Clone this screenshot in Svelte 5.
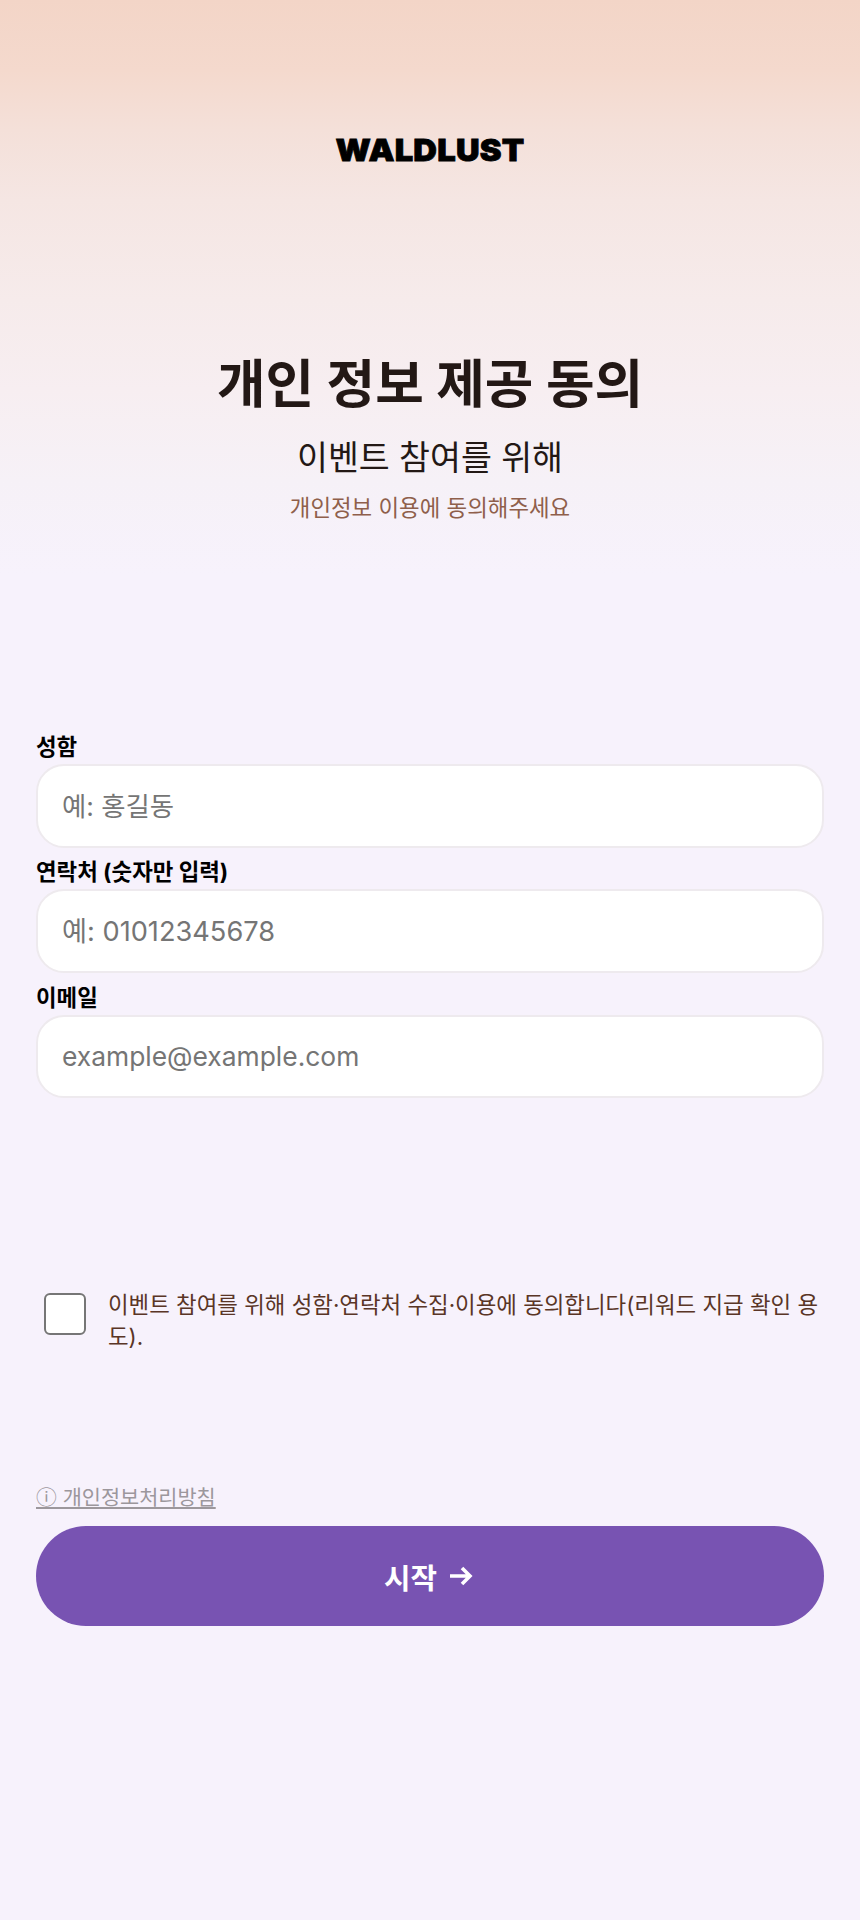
<script>
  let name = ''
  let phone = ''
  let email = ''
  let agreed = false
</script>

<div class="page">
  <header class="logo">WALDLUST</header>

  <section class="intro">
    <h1>개인 정보 제공 동의</h1>
    <h2>이벤트 참여를 위해</h2>
    <p>개인정보 이용에 동의해주세요</p>
  </section>

  <form class="fields" on:submit|preventDefault>
    <label class="field">
      <span>성함</span>
      <input type="text" placeholder="예: 홍길동" bind:value={name} />
    </label>
    <label class="field">
      <span>연락처 (숫자만 입력)</span>
      <input class="tel" type="tel" placeholder="예: 01012345678" bind:value={phone} />
    </label>
    <label class="field">
      <span>이메일</span>
      <input type="text" placeholder="example@example.com" bind:value={email} />
    </label>
  </form>

  <label class="consent">
    <input type="checkbox" bind:checked={agreed} />
    <span>이벤트 참여를 위해 성함·연락처 수집·이용에 동의합니다(리워드 지급 확인 용도).</span>
  </label>

  <a class="policy" href="#policy">ⓘ 개인정보처리방침</a>

  <button class="start" type="button">
    시작
    <svg viewBox="0 0 24 24" width="24" height="24" fill="none" stroke="currentColor" stroke-width="3.6">
      <path d="M1 12h20M13 4l8 8-8 8" />
    </svg>
  </button>
</div>

<style>
  :global(body) {
    margin: 0;
  }

  .page {
    height: 1920px;
    box-sizing: border-box;
    padding: 132px 36px 0;
    display: flex;
    flex-direction: column;
    font-family: Inter, "Noto Sans CJK KR", sans-serif;
    background: linear-gradient(180deg, #f3d5c7 0, #f4d9cd 70px, #f4e0d9 130px, #f5e6e3 200px, #f6ebeb 300px, #f7eef1 390px, #f6f1f7 480px, #f7f2fc 574px);
  }

  .logo {
    text-align: center;
    font-size: 30px;
    line-height: 36px;
    font-weight: 900;
    letter-spacing: 0.2px;
    -webkit-text-stroke: 0.8px #000;
    color: #000;
    transform: scaleX(1.09);
  }

  .intro {
    margin-top: 182px;
    text-align: center;
  }

  h1 {
    margin: 0;
    font-size: 52.8px;
    line-height: 68px;
    font-weight: 700;
    color: #231815;
  }

  h2 {
    margin: 18px 0 0;
    font-size: 33.6px;
    line-height: 44px;
    font-weight: 400;
    color: #231815;
  }

  .intro p {
    margin: 13px 0 0;
    font-size: 22.4px;
    line-height: 30px;
    color: #8f5f4b;
  }

  .fields {
    margin-top: 208px;
    display: flex;
    flex-direction: column;
    gap: 8.75px;
  }

  .field {
    display: flex;
    flex-direction: column;
    gap: 1px;
  }

  .field span {
    font-size: 22.4px;
    line-height: 32px;
    font-weight: 700;
    color: #000;
  }

  .field input {
    height: 83.5px;
    box-sizing: border-box;
    padding: 0 24px;
    border: 2px solid #eeeaee;
    border-radius: 28px;
    background: #fff;
    font: inherit;
    font-size: 26.4px;
    outline: none;
  }

  .field input::placeholder {
    color: #757575;
    opacity: 1;
  }

  .field input.tel {
    font-size: 27.2px;
  }

  .consent {
    margin-top: 191px;
    padding-left: 8px;
    display: flex;
    gap: 22px;
    font-size: 22.4px;
    line-height: 32px;
    color: #5a3526;
  }

  .consent input {
    appearance: none;
    flex: none;
    width: 42px;
    height: 42px;
    margin: 4px 0 0;
    border: 2.6px solid #767676;
    border-radius: 6px;
    background: #fff;
  }

  .policy {
    margin-top: 131px;
    align-self: flex-start;
    font-size: 20.8px;
    line-height: 28px;
    color: #9c979c;
    text-decoration: underline;
  }

  .start {
    margin-top: 14px;
    height: 100px;
    border: none;
    border-radius: 50px;
    background: #7853b2;
    color: #fff;
    font: inherit;
    font-size: 28.8px;
    font-weight: 700;
    display: flex;
    align-items: center;
    justify-content: center;
    gap: 12px;
  }

  .start svg {
    margin-right: 3px;
  }
</style>
